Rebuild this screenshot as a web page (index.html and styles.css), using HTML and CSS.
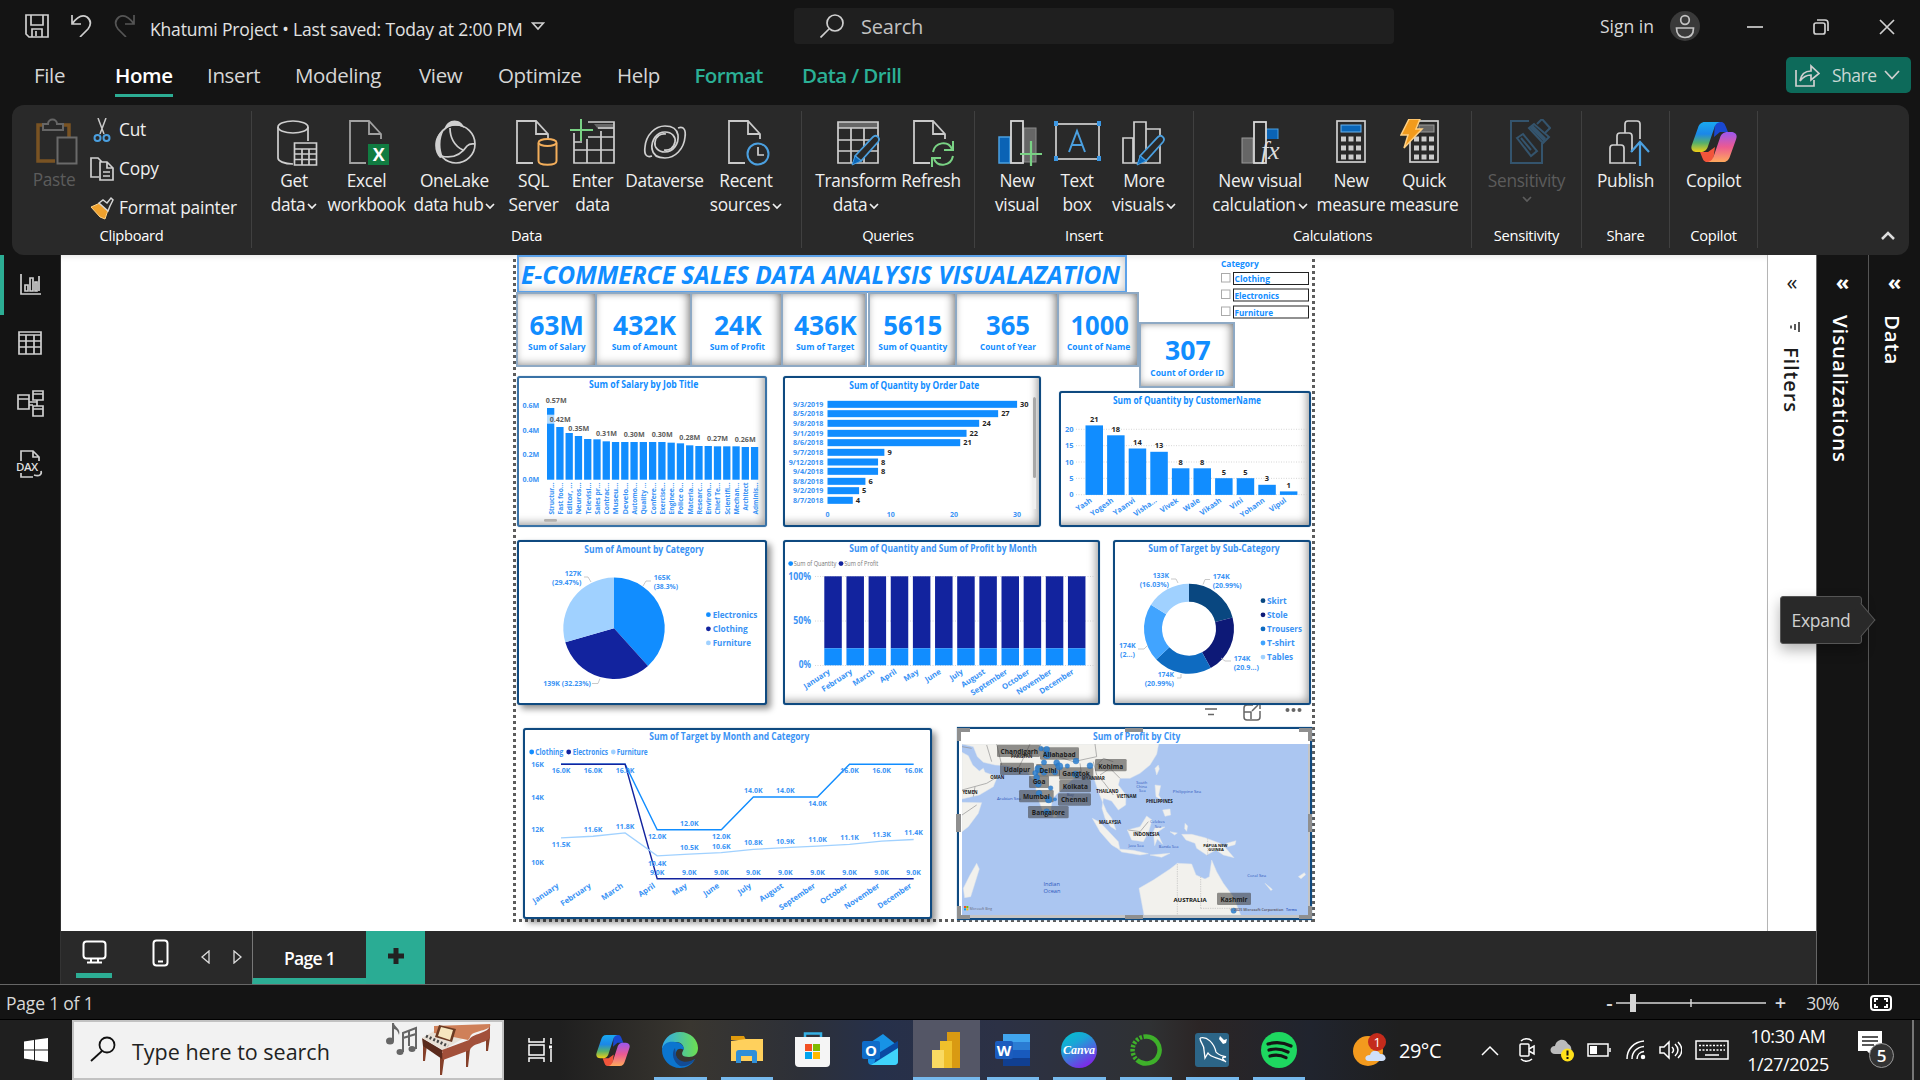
FILE: index.html
```html
<!DOCTYPE html>
<html lang="en">
<head>
<meta charset="utf-8">
<title>Khatumi Project</title>
<link rel="stylesheet" href="styles.css">
</head>
<body>
<svg class="defs" width="0" height="0" aria-hidden="true">
  <defs>
    <linearGradient id="cpBlue" x1="0" y1="0" x2="0" y2="1"><stop offset="0" stop-color="#19a9f0"/><stop offset=".4" stop-color="#1b87e8"/><stop offset=".7" stop-color="#57b06a"/><stop offset="1" stop-color="#f0cf15"/></linearGradient>
    <linearGradient id="cpPink" x1="0" y1="0" x2="0" y2="1"><stop offset="0" stop-color="#9b57f0"/><stop offset=".5" stop-color="#ec5a91"/><stop offset="1" stop-color="#ffa95c"/></linearGradient>
    <symbol id="copilot" viewBox="0 0 46 48" preserveAspectRatio="none">
      <path d="M24 0h6c3 0 4 3 5 6l2 6h-8l-6 6z" fill="#1a48d0"/>
      <path d="M22 48h-6c-3 0-4-3-5-6l-2-6h8l7-6z" fill="#f2553b"/>
      <path d="M14 0h15c-4 1-5 4-6 8l-6 21c-1 4-3 7-8 7H6c-4 0-7-3-5-9L7 7c1-4 3-7 7-7z" fill="url(#cpBlue)"/>
      <path d="M32 48H17c4-1 5-4 6-8l6-21c1-4 3-7 8-7h3c4 0 7 3 5 9l-6 20c-1 4-3 7-7 7z" fill="url(#cpPink)"/>
    </symbol>
    <symbol id="page" viewBox="0 0 42 48"><path d="M17 44H1V2h19l12 13v5M20 2v13h12" fill="none" stroke="#c9c9c9" stroke-width="1.8"/></symbol>
    <symbol id="pencil" viewBox="0 0 30 32"><path d="M4 22 22 3c3-3 8 1 5 5L10 27z" fill="#292929" stroke="#4ba0e0" stroke-width="1.8"/><path d="M4 22l6 5-9 4z" fill="#0a66b8" stroke="#4ba0e0"/></symbol>
    <symbol id="chev" viewBox="0 0 10 7"><path d="M1 1l4 4 4-4" fill="none" stroke="currentColor" stroke-width="1.7"/></symbol>
  </defs>
</svg>

<div class="app">
  <header class="titlebar">
    <div class="quick">
      <svg width="24" height="24" viewBox="0 0 24 24" class="ln"><path d="M1 1h22v22H4l-3-3zM6 1v10h12V1M7 23v-8h10v8M11 17v5"/></svg>
      <svg width="21" height="23" viewBox="0 0 21 23" class="ln"><path d="M1 1v9h9M1 10C6 3 11 0 16 3c5 4 4 8 1 12l-8 8"/></svg>
      <svg width="21" height="23" viewBox="0 0 21 23" class="ln dim"><path d="M20 1v9h-9M20 10C15 3 10 0 5 3c-5 4-4 8-1 12l8 8"/></svg>
    </div>
    <div class="doc"><span>Khatumi Project • Last saved: Today at 2:00 PM</span>
      <svg width="14" height="9" viewBox="0 0 14 9" class="ln"><path d="M1.500 1h11L7 7z"/></svg></div>
    <div class="search">
      <svg width="24" height="24" viewBox="0 0 24 24" class="ln"><circle cx="15" cy="9" r="8"/><path d="M9 15l-8.500 8.500"/></svg><span>Search</span></div>
    <div class="signin">Sign in</div>
    <svg class="avatar" width="30" height="30" viewBox="0 0 30 30"><circle cx="15" cy="15" r="15" fill="#3a3a3a"/><g fill="none" stroke="#c4c4c4" stroke-width="1.700"><circle cx="15" cy="9" r="4.300"/><path d="M6.500 17h17c0 6-3 9.500-8.500 9.500S6.500 23 6.500 17z"/></g></svg>
    <div class="winbtns">
      <svg width="16" height="16" viewBox="0 0 16 16" class="ln"><path d="M0 8h16"/></svg>
      <svg width="16" height="16" viewBox="0 0 16 16" class="ln"><rect x="1" y="4" width="11" height="11" rx="2"/><path d="M4 1h8q3 0 3 3v8"/></svg>
      <svg width="16" height="16" viewBox="0 0 16 16" class="ln"><path d="M1 1l14 14M15 1L1 15"/></svg>
    </div>
  </header>

  <nav class="menu">
    <span>File</span><span class="on">Home</span><span>Insert</span><span>Modeling</span><span>View</span><span>Optimize</span><span>Help</span><span class="ctx">Format</span><span class="ctx">Data / Drill</span>
    <div class="share"><svg width="25" height="23" viewBox="0 0 25 23" class="ln"><path d="M1 6v16h18v-6M5 17c1-6 4-10 11-10V2l8 7.500-8 6.500v-5c-5 0-8 2-11 6z"/></svg><span>Share</span><svg width="16" height="10" viewBox="0 0 16 10" class="ln"><path d="M1 1l7 7.500L15 1"/></svg></div>
  </nav>

  <section class="ribbon">
    <div class="group g-clip">
      <div class="row">
        <div class="btn off"><svg width="42" height="48" viewBox="0 0 42 48"><path d="M9 7H2v36h17M25 7h8v12" fill="none" stroke="#795323" stroke-width="3.500"/><path d="M7 12V6h5c0-6 9-6 9 0h6v6z" fill="#292929" stroke="#666" stroke-width="2"/><rect x="21.500" y="19.500" width="19" height="26" fill="#292929" stroke="#6a6a6a" stroke-width="2"/></svg><span>Paste</span></div>
        <ul class="small">
          <li><svg width="24" height="24" viewBox="0 0 24 24"><path d="M8 0l6 16M16 0l-6 16" stroke="#c9c9c9" stroke-width="1.500"/><g fill="none" stroke="#4ba0e0" stroke-width="2"><circle cx="7.500" cy="20" r="3"/><circle cx="16.500" cy="20" r="3"/></g></svg>Cut</li>
          <li><svg width="24" height="24" viewBox="0 0 24 24" class="ln"><path d="M9 20H1V1h7l4 4M10 5h7l6 6v12H10zM17 5v6h6M13 15h7M13 19h7"/></svg>Copy</li>
          <li><svg width="24" height="24" viewBox="0 0 24 24"><path d="M1 11l9-4 8 7-3 9-5-2z" fill="#f0a22e" stroke="#ffd48a"/><path d="M9 7l4-3 4 3 4-5 2 2-3 6-2 5-9-8z" fill="#292929" stroke="#d5d5d5" stroke-width="1.500"/></svg>Format painter</li>
        </ul>
      </div><h2>Clipboard</h2>
    </div>
    <div class="group g-data">
      <div class="row">
        <div class="btn"><svg width="42" height="48" viewBox="0 0 42 48" class="ln"><ellipse cx="17" cy="8" rx="15" ry="6"/><path d="M2 8v31c0 3 6 6 15 6M32 8v14"/><path d="M18.500 24h22v22h-22zM18.500 30h22M18.500 35h22M18.500 40.500h22M26 30v16M33 30v16"/></svg><span>Get</span><span>data<svg class="cv"><use href="#chev"/></svg></span></div>
        <div class="btn"><svg width="42" height="48" viewBox="0 0 42 48"><use href="#page" opacity=".75"/><rect x="19" y="25" width="21" height="21" fill="#107c41"/><text x="29.500" y="41.500" class="xl">X</text></svg><span>Excel</span><span>workbook</span></div>
        <div class="btn mid"><svg width="42" height="48" viewBox="0 0 42 48"><path d="M10 12C12-2 28-1 30 9c-8-4-15-3-20 3z" fill="#cfcfcf"/><path d="M10 11C-1 16-1 33 6 39l3-1C5 29 6 18 10 11z" fill="#cfcfcf"/><ellipse cx="22" cy="25" rx="19" ry="19" class="st"/><path class="st" d="M7 37c12 3 20-1 26-10 3-3 5-2 8-2M16 9c0 9 4 18 13 22"/></svg><span>OneLake</span><span>data hub<svg class="cv"><use href="#chev"/></svg></span></div>
        <div class="btn"><svg width="42" height="48" viewBox="0 0 42 48"><use href="#page"/><g fill="#292929" stroke="#f3ae5b" stroke-width="2"><path d="M22.500 24v18c0 5 18 5 18 0V24"/><ellipse cx="31.500" cy="23.500" rx="9" ry="3.500"/></g></svg><span>SQL</span><span>Server</span></div>
        <div class="btn mid"><svg width="46" height="48" viewBox="0 0 46 48"><path d="M24 5h20v5H28z" fill="#666"/><path class="st" d="M18 3h26v41H4V14M28 9h16M18 18h26M12 23h-8M4 31h40M17 20v24M31 12v32"/><path d="M11 0v22M0 11h23" stroke="#79d284" stroke-width="2"/></svg><span>Enter</span><span>data</span></div>
        <div class="btn mid"><svg width="44" height="48" viewBox="0 0 44 48"><g class="st"><path d="M9 37C3 39 1 35 2 28 3 16 12 7 22 7c7 0 12 3 13 9 1 9-5 17-13 17-7 0-11-5-10-10 1-6 6-9 11-8"/><path d="M35 9c6-2 8 2 7 9-1 12-10 21-20 21-7 0-12-3-13-9-1-9 5-17 13-17 7 0 11 5 10 10-1 6-6 9-11 8"/></g></svg><span>Dataverse</span></div>
        <div class="btn"><svg width="42" height="48" viewBox="0 0 42 48"><use href="#page"/><circle cx="30" cy="35" r="10.500" fill="#292929" stroke="#4ba0e0" stroke-width="2"/><path class="st" d="M30 28v8h6"/></svg><span>Recent</span><span>sources<svg class="cv"><use href="#chev"/></svg></span></div>
      </div><h2>Data</h2>
    </div>
    <div class="group g-query">
      <div class="row">
        <div class="btn"><svg width="46" height="48" viewBox="0 0 46 48"><path d="M2 3h40v6H2z" fill="#666"/><path class="st" d="M2 3h40v41H2zM2 9h40M2 21h40M2 32h40M15 9v35M28 9v35"/><use href="#pencil" x="15" y="15" width="30" height="32"/></svg><span>Transform</span><span>data<svg class="cv"><use href="#chev"/></svg></span></div>
        <div class="btn"><svg width="42" height="48" viewBox="0 0 42 48"><use href="#page"/><circle cx="30" cy="35" r="12" fill="#292929"/><path d="M20 33c2-10 15-12 19-3M40 22v9h-9M40 37c-2 10-15 12-19 3M19 48v-9h9" fill="none" stroke="#79d284" stroke-width="2"/></svg><span>Refresh</span></div>
      </div><h2>Queries</h2>
    </div>
    <div class="group g-insert">
      <div class="row">
        <div class="btn"><svg width="44" height="48" viewBox="0 0 44 48"><rect x="1" y="18" width="11" height="26" fill="#0a63b5" stroke="#4ba0e0" stroke-width="1.500"/><rect x="26" y="9" width="12" height="34" fill="#666" stroke="#8b8b8b"/><rect x="13" y="2" width="12" height="42" fill="#292929" class="st2"/><path d="M33 22v25M22 35h22" stroke="#79d284" stroke-width="2.200"/></svg><span>New</span><span>visual</span></div>
        <div class="btn mid"><svg width="48" height="48" viewBox="0 0 48 48"><rect x="3" y="5" width="43" height="35" class="st"/><path d="M16 33l8-21 8 21M19 26h11" fill="none" stroke="#4ba0e0" stroke-width="2"/><path d="M1 2h4v5H1zM44 2h4v5h-4zM1 37h4v5H1zM44 37h4v5h-4z" fill="#3b97e3"/></svg><span>Text</span><span>box</span></div>
        <div class="btn mid"><svg width="46" height="48" viewBox="0 0 46 48"><path class="st" d="M2 19h10v25H2zM13 3h12v41H13zM25 10h14v34H25"/><use href="#pencil" x="15" y="15" width="30" height="32"/></svg><span>More</span><span>visuals<svg class="cv"><use href="#chev"/></svg></span></div>
      </div><h2>Insert</h2>
    </div>
    <div class="group g-calc">
      <div class="row">
        <div class="btn"><svg width="44" height="48" viewBox="0 0 44 48"><rect x="1" y="19" width="11" height="25" fill="#666" stroke="#999"/><rect x="25" y="10" width="12" height="34" fill="#0a63b5" stroke="#4ba0e0"/><path d="M24 20h20v28H22z" fill="#292929"/><rect x="13" y="3" width="12" height="41" fill="#292929" class="st2"/><text x="20" y="40" class="fx">fx</text></svg><span>New visual</span><span>calculation<svg class="cv"><use href="#chev"/></svg></span></div>
        <div class="btn mid"><svg width="30" height="48" viewBox="0 0 30 48"><rect x="1" y="2" width="28" height="41" class="st"/><rect x="5" y="6" width="20" height="7" fill="#0a66b8" stroke="#6ab4ef"/><path d="M5 20h20M5 29h20M5 38h20" stroke="#ccc" stroke-width="5" stroke-dasharray="5 2.500"/></svg><span>New</span><span>measure</span></div>
        <div class="btn left"><svg width="40" height="48" viewBox="0 0 40 48"><rect x="10" y="2" width="28" height="41" class="st"/><rect x="19" y="6" width="15" height="7" fill="#666" stroke="#999"/><path d="M14 20h20M14 29h20M14 38h20" stroke="#ccc" stroke-width="5" stroke-dasharray="5 2.500"/><path d="M9 0h11l-4 10h6L4 29l4-13H1z" fill="#f29b1d" stroke="#ffd083" stroke-width="1.500"/></svg><span>Quick</span><span>measure</span></div>
      </div><h2>Calculations</h2>
    </div>
    <div class="group g-one">
      <div class="row"><div class="btn off"><svg width="42" height="48" viewBox="0 0 42 48"><g fill="none" stroke="#34546d" stroke-width="2"><path d="M20 2H2v42h31V24M8 19l6-4 14 17-6 5zM12 19l10 12M20 9l5-4 15 13-6 6z"/><path d="M28 5l5-5 8 9-5 5"/></g><path d="M21 9l14 14 2-4L24 6z" fill="#34546d"/></svg><span>Sensitivity</span><span><svg class="cv"><use href="#chev"/></svg></span></div></div><h2>Sensitivity</h2>
    </div>
    <div class="group g-one b">
      <div class="row"><div class="btn"><svg width="42" height="48" viewBox="0 0 42 48"><path class="st" d="M28 44H2V29q0-3 3-3h8q3 0 3 3v15M9 26V17q0-3 3-3h9q3 0 3 3v16M17 14V5q0-3 3-3h9q3 0 3 3v15"/><path d="M32 47V24M23 33l9-10 9 10" fill="none" stroke="#4ba0e0" stroke-width="2.200"/></svg><span>Publish</span></div></div><h2>Share</h2>
    </div>
    <div class="group g-one b">
      <div class="row"><div class="btn mid"><svg width="46" height="48" viewBox="0 0 46 48"><use href="#copilot" y="3" width="46" height="40"/></svg><span>Copilot</span></div></div><h2>Copilot</h2>
    </div>
    <svg class="fold" width="14" height="9" viewBox="0 0 14 9"><path d="M1 8l6-6 6 6" fill="none" stroke="#ddd" stroke-width="2.500"/></svg>
  </section>

  <main class="work">
    <aside class="rail">
      <div class="on"><svg width="22" height="22" viewBox="0 0 22 22" class="ln"><path d="M1 1v20h20M5 12h3v6H5zM10 5h3v13h-3zM15 9h2v9h-2zM19 3v15"/></svg></div>
      <div><svg width="24" height="24" viewBox="0 0 24 24" class="ln"><path d="M1 1h22v22H1zM1 4h22M1 10h22M1 16h22M8 4v19M16 4v19"/></svg></div>
      <div><svg width="27" height="27" viewBox="0 0 27 27" class="ln"><path d="M1 5h11v14H1zM1 9h11M16 1h10v9H16zM16 4h10M16 16h10v10H16zM16 19h10M12 12h8v-2M12 15h4M20 12v4"/></svg></div>
      <div><svg width="28" height="28" viewBox="0 0 28 28" class="ln"><path d="M5 11V1h12l6 6v4M17 1v6h6M5 23v4h12"/><text x="0" y="21" class="dax">DAX</text><path d="M18 25c6 2 8-1 7-4"/></svg></div>
    </aside>

    <div class="center">
      <div class="stage">
        <div class="report">
          <h1 class="visual banner"><svg viewBox="519 257 606 34" data-chart="banner"></svg></h1>
          <div class="cards" data-chart="cards"></div>
          <div class="visual slicer"><svg viewBox="1216 255 96 66" data-chart="slicer"></svg></div>
          <div class="visual v-salary lite"><svg viewBox="519 378 246 147" data-chart="salary"></svg></div>
          <div class="visual v-date"><svg viewBox="785 378 254 147" data-chart="date"></svg></div>
          <div class="visual v-customer"><svg viewBox="1061 393 248 132" data-chart="customer"></svg></div>
          <div class="visual v-amount drop"><svg viewBox="519 542 246 161" data-chart="amount"></svg></div>
          <div class="visual v-stack"><svg viewBox="785 542 313 161" data-chart="stack"></svg></div>
          <div class="visual v-donut"><svg viewBox="1115 542 194 161" data-chart="donut"></svg></div>
          <svg class="tools" viewBox="1200 705 106 17"><g fill="none" stroke="#666" stroke-width="1.500"><path d="M1205 709h12M1208 714.500h6"/><path d="M1253 705h-6q-3 0-3 3v9q0 3 3 3h10q3 0 3-3v-6M1244 712h7v7M1252 711l6-6M1260 705v4"/></g><g fill="#666"><circle cx="1287.500" cy="710" r="2"/><circle cx="1293.500" cy="710" r="2"/><circle cx="1299.500" cy="710" r="2"/></g></svg>
          <div class="visual v-target drop"><svg viewBox="525 730 405 187" data-chart="target"></svg></div>
          <div class="visual v-map"><svg viewBox="959 729 351 189" data-chart="map"></svg></div>
        </div>
        <aside class="filters">
          <b class="dbl">«</b>
          <svg width="14" height="12" viewBox="0 0 14 12"><path d="M11 1v10M7 3v6M3 4.500v3" stroke="#222" stroke-width="1.500"/></svg>
          <span>Filters</span>
        </aside>
      </div>
      <footer class="tabs">
        <div class="view on"><svg width="25" height="24" viewBox="0 0 25 24" class="wh"><rect x="1.500" y="1.500" width="22" height="17" rx="3"/><path d="M9 19v3M16 19v3M5 22.500h15"/></svg></div>
        <div class="view"><svg width="17" height="28" viewBox="0 0 17 28" class="wh"><rect x="1.500" y="1.500" width="14" height="25" rx="3"/><path d="M6 22.500h5"/></svg></div>
        <svg class="tri" width="9" height="14" viewBox="0 0 9 14"><path d="M8 1v12L1 7z"/></svg>
        <svg class="tri" width="9" height="14" viewBox="0 0 9 14"><path d="M1 1v12l7-6z"/></svg>
        <div class="tab">Page 1</div>
        <div class="add"><svg width="18" height="18" viewBox="0 0 18 18"><path d="M9 1v16M1 9h16" stroke="#222" stroke-width="5"/></svg></div>
      </footer>
    </div>
    <aside class="pane"><b class="dbl">«</b><span>Visualizations</span></aside>
    <aside class="pane"><b class="dbl">«</b><span>Data</span></aside>
    <div class="tip">Expand</div>
  </main>

  <div class="status">
    <span>Page 1 of 1</span>
    <div class="zoom"><b>-</b><svg width="150" height="18" viewBox="0 0 150 18"><path d="M0 9h150M75 5v8" stroke="#d5d5d5" stroke-width="1.500"/><rect x="14" y="0" width="6" height="18" fill="#d5d5d5"/></svg><b>+</b><span>30%</span>
      <svg width="22" height="16" viewBox="0 0 22 16" class="wh"><rect x="1" y="1" width="20" height="14" rx="3"/><path d="M8 4H5v3M5 9v3h3M14 4h3v3M17 9v3h-3"/></svg></div>
  </div>

  <div class="taskbar">
    <div class="start"><svg width="24" height="24" viewBox="0 0 24 24"><path d="M0 3.500L10 2v9.500H0zM11 1.800L24 0v11.500H11zM0 12.500h10V22L0 20.500zM11 12.500h13V24l-13-1.800z" fill="#fff"/></svg></div>
    <div class="find">
      <svg width="26" height="26" viewBox="0 0 26 26" fill="none" stroke="#111" stroke-width="1.800"><circle cx="17" cy="9" r="7.500"/><path d="M12 15L1 25"/></svg>
      <span>Type here to search</span>
      <svg class="art" width="108" height="54" viewBox="0 0 108 54">
        <g fill="#666"><ellipse cx="4" cy="18" rx="4" ry="3.500"/><ellipse cx="14" cy="29" rx="3.500" ry="3"/><ellipse cx="26" cy="26" rx="3.500" ry="3"/><path d="M6 0h2c0 4 7 5 5 12-1-4-3-6-5-6v12H6z"/></g>
        <path d="M17 29V10l13-5v21M17 15l13-4M23 8v15" fill="none" stroke="#666" stroke-width="2"/>
        <g fill="#85402a"><path d="M37 20l4 2-2 16h-2zM54 30h5l-3 22h-2zM80 26h4l-2 18h-2zM100 14h4l-2 14h-2z"/></g>
        <path d="M36 15l20 12v9L37 23z" fill="#5a2a1c"/><path d="M36 15l12-7 30 7-21 12z" fill="#e8e0d6"/><path d="M40 13l22 10" stroke="#444" stroke-width="3" stroke-dasharray="2 2"/>
        <path d="M48 3l56-2c2 5-8 6-16 9-5 2-3 5-6 7L48 10z" fill="#cf8059"/><path d="M56 27l27-10c3-7 20-6 21-15v12c-3 7-17 5-20 13L57 37z" fill="#a2503a"/>
        <path d="M53 2l17 4-4 13-17-5z" fill="#6b3a22"/><path d="M55 4l12 3-3 10-12-4z" fill="#f6e6bf"/>
      </svg>
    </div>
    <div class="tv"><svg width="24" height="24" viewBox="0 0 24 24" fill="none" stroke="#fff" stroke-width="1.500"><path d="M1 0v4h15V0M1 24v-4h15v4M1 7h15v10H1zM23 0v6M23 11v13"/><path d="M21 9h3" stroke-width="3"/></svg></div>
    <div class="cp"><svg width="34" height="31" viewBox="0 0 34 31"><use href="#copilot" width="34" height="31"/></svg></div>
    <div class="apps">
      <div class="run"><svg width="36" height="36" viewBox="0 0 36 36"><defs><linearGradient id="eg" x1="0" x2="1"><stop offset="0" stop-color="#2fa8ee"/><stop offset="1" stop-color="#6de04f"/></linearGradient></defs><path d="M0 18C0 8 8 0 18 0c11 0 18 8 18 16 0 6-4 9-9 9-7 0-8-3-6-6 2-4-1-9-7-9C7 10 1 13 0 18z" fill="url(#eg)"/><path d="M0 18c1-7 7-9 13-8 6 0 9 4 9 8-5-3-9 0-8 6 1 7 9 10 19 3-3 6-9 9-15 9C8 36 0 28 0 18z" fill="#0b75cf"/><path d="M13 16c-4 5-2 14 5 18 6 1 12-2 15-7-8 5-17 3-19-4z" fill="#134b93"/></svg></div>
      <div class="run"><svg width="32" height="28" viewBox="0 0 32 28"><path d="M0 0h13l2 4H0z" fill="#e09a0c"/><path d="M0 5l15-2h17v22H0z" fill="#ffd05c"/><path d="M5 27V17q0-3 3-3h15q3 0 3 3v10h-5v-7H10v7z" fill="#2f8fd9"/></svg></div>
      <div><svg width="36" height="36" viewBox="0 0 36 36"><path d="M10 7V1.500h16V7" fill="none" stroke="#35b0e4" stroke-width="2.500"/><path d="M0 5h35v26q0 4-4 4H4q-4 0-4-4z" fill="#f5f5f5"/><path d="M10 12h7v7h-7z" fill="#f25022"/><path d="M18 12h7v7h-7z" fill="#7fba00"/><path d="M10 20h7v7h-7z" fill="#00a4ef"/><path d="M18 20h7v7h-7z" fill="#ffb900"/></svg></div>
      <div><svg width="36" height="32" viewBox="0 0 36 32"><path d="M6 10L21 0l15 12v15q0 4-4 4H10q-4 0-4-4z" fill="#1793e6"/><path d="M15 20l21-13v9L12 30z" fill="#0a4aa3"/><path d="M36 14v13q0 4-4 4H9z" fill="#3fd3fb"/><rect y="7" width="18" height="18" rx="2" fill="#0f6cc9"/><text x="9" y="21.500" class="lg">O</text></svg></div>
      <div class="run act"><svg width="28" height="36" viewBox="0 0 28 36"><path d="M15 0h13v36H15z" fill="#d99a12"/><path d="M8 9h12v27H8z" fill="#efc02c"/><path d="M0 18h12v18H0z" fill="#f9da62"/></svg></div>
      <div class="run"><svg width="36" height="32" viewBox="0 0 36 32"><path d="M8 0h27v8H8z" fill="#41a5ee"/><path d="M8 8h27v8H8z" fill="#2b7cd3"/><path d="M8 16h27v8H8z" fill="#185abd"/><path d="M8 24h27v8H8z" fill="#103f91"/><rect y="7" width="18" height="18" rx="2" fill="#1b5cbe"/><text x="9" y="21.500" class="lg">W</text></svg></div>
      <div class="run"><svg width="36" height="36" viewBox="0 0 36 36"><defs><linearGradient id="cg" x1="0" y1="0" x2=".6" y2="1"><stop offset="0" stop-color="#00c4cc"/><stop offset=".4" stop-color="#1aa5d6"/><stop offset="1" stop-color="#7d2ae8"/></linearGradient></defs><circle cx="18" cy="18" r="18" fill="url(#cg)"/><text x="18" y="22" class="cv-logo">Canva</text></svg></div>
      <div class="run"><svg width="32" height="32" viewBox="0 0 32 32" fill="none" stroke="#3eb02a"><path d="M16 2.500a13.500 13.500 0 1 1-9 23.500" stroke-width="4.500"/><path d="M16 2.500a13.500 13.500 0 0 0-9 23.500" stroke-width="4.500" stroke-dasharray="2.500 1.500"/></svg></div>
      <div class="run"><svg width="34" height="34" viewBox="0 0 34 34"><rect width="34" height="34" rx="3" fill="#2c6587"/><path d="M5 5c7-2 14 5 16 14 2 3 7 4 10 5-4 0-5 1 0 5M5 5c0 5 4 6 4 12l1 8 3-5c3 5 9 4 16 8" fill="none" stroke="#fff" stroke-width="1.300"/><path d="M25 3l4 4 3-1-1 4-3 1-4-5z" fill="#fff"/></svg></div>
      <div class="run"><svg width="36" height="36" viewBox="0 0 36 36"><circle cx="18" cy="18" r="18" fill="#1ed760"/><path d="M7 12c8-2.500 16-1.500 23 2M8 18c7-2 13-1 19 2M9 24c6-1.500 11-1 16 1.700" fill="none" stroke="#151515" stroke-width="3.200" stroke-linecap="round"/></svg></div>
    </div>
    <div class="weather"><svg width="34" height="34" viewBox="0 0 34 34"><circle cx="15" cy="18" r="15" fill="#f39a1e"/><path d="M16 28c-5 0-5-6 1-6 1-5 8-6 10-1 6-1 8 7 2 7z" fill="#cfe0fa"/><circle cx="24" cy="9" r="9" fill="#c42b1c"/><text x="24" y="14" class="one">1</text></svg><span>29°C</span></div>
    <div class="tray">
      <svg width="18" height="11" viewBox="0 0 18 11"><path d="M1 10l8-8 8 8"/></svg>
      <svg width="16" height="24" viewBox="0 0 16 24"><rect x="1" y="6" width="9" height="12" rx="1"/><path d="M10 11l5-3v8l-5-3M2 3c3-3 8-3 11 0M2 21c3 3 8 3 11 0"/></svg>
      <svg width="24" height="24" viewBox="0 0 24 24"><path d="M5 16c-6 0-6-8 0-8C6 1 15-1 18 6c5 2 4 10 0 10z" fill="#bbb" stroke="none"/><circle cx="17.500" cy="17" r="6.500" fill="#ffe11a" stroke="none"/><path d="M17.500 12.500v5M17.500 19v2" stroke="#111" stroke-width="2"/></svg>
      <svg width="24" height="14" viewBox="0 0 24 14"><path d="M1 1h20v12H1zM23 5v4"/><path d="M3 3h7v8H3z" fill="#fff" stroke="none"/></svg>
      <svg width="20" height="20" viewBox="0 0 20 20"><path d="M1 19C1 9 8 2 18 1M6 19C6 12 11 7 18 6.500M11 19c0-4 3-7 7-7.500"/><circle cx="17" cy="17" r="1.500" fill="#fff"/></svg>
      <svg width="23" height="20" viewBox="0 0 23 20"><path d="M1 7v6h4l5 5V2L5 7zM13 7c2 2 2 4 0 6M16 4c4 4 4 8 0 12M19 2c5 5 5 11 0 16"/></svg>
      <svg width="34" height="20" viewBox="0 0 34 20"><path d="M1 1h32v18H1zM10 15h14"/><path d="M4 5.500h26M4 10h26" stroke-dasharray="2 1.500"/></svg>
    </div>
    <div class="clock"><span>10:30 AM</span><span>1/27/2025</span></div>
    <svg class="notif" width="37" height="38" viewBox="0 0 37 38"><path d="M1 0h24v20H16v6l-6-6H1z" fill="#fff"/><path d="M5 6h16M5 10h16M5 14h12" stroke="#222" stroke-width="1.500"/><circle cx="24.500" cy="24.500" r="12" fill="#333" stroke="#999"/><text x="24.500" y="31" class="five">5</text></svg>
    <i class="edge"></i>
  </div>
</div>
<script src="charts.js"></script>
</body>
</html>
```
FILE: styles.css
```css
* { box-sizing: border-box; }
body { margin: 0; background: #141414; color: #f0f0f0; font-family: "Open Sans", "Noto Sans", sans-serif; overflow: hidden; }
h1, h2, ul { margin: 0; padding: 0; font-weight: 400; list-style: none; }
svg { display: block; flex: none; }
.defs { position: absolute; }
.app { width: 1920px; height: 1080px; display: grid; grid-template-rows: 52px 53px 150px 730px 35px 60px; }
.ln, .st { fill: none; stroke: #cfcfcf; stroke-width: 1.7; }
.st2 { stroke: #d8d8d8; stroke-width: 1.8; }
.dim { opacity: .35; }
.wh { fill: none; stroke: #fff; stroke-width: 2; }

/* title bar */
.titlebar { display: grid; grid-template-columns: 150px 644px 600px 206px 70px 48px 1fr; align-items: center; }
.quick { display: flex; gap: 22px; padding-left: 25px; }
.doc { display: flex; gap: 8px; align-items: center; font-size: 17.5px; letter-spacing: -.17px; color: #e2e2e2; padding-top: 6px; white-space: nowrap; }
.doc svg { margin-top: -5px; }
.search { height: 36px; background: #1f1f1f; border-radius: 4px; display: flex; align-items: center; gap: 17px; padding-left: 26px; font-size: 20px; letter-spacing: -.2px; color: #c2c2c2; }
.signin { grid-column: 5; font-size: 17.5px; letter-spacing: 0; color: #d8d8d8; }
.winbtns { display: flex; gap: 50px; padding-left: 29px; padding-top: 2px; }

/* menu */
.menu { display: grid; grid-template-columns: 81px 92px 88px 124px 79px 119px 77.5px 107.5px 984px 125px; padding-left: 34px; font-size: 20.5px; letter-spacing: -.35px; color: #d6d6d6; white-space: nowrap; }
.menu > span { line-height: 46px; height: 45px; justify-self: start; }
.menu .on { color: #fff; font-weight: 600; border-bottom: 3px solid #2cad94; letter-spacing: -.4px; }
.menu .ctx { color: #2bb096; letter-spacing: -.6px; font-weight: 600; }
.share { margin-top: 5px; width: 125px; height: 36px; background: #0d6a5a; border-radius: 5px; display: flex; align-items: center; padding-left: 9px; font-size: 17.5px; letter-spacing: -.5px; color: #c9d8d4; }
.share span { margin: 0 7px 0 12px; }

/* ribbon */
.ribbon { margin: 0 12px; background: #292929; border-radius: 12px; display: flex; position: relative; padding: 6px 0 7px; }
.group { border-right: 1px solid #404040; display: flex; flex-direction: column; justify-content: space-between; }
.group h2 { font-size: 14.7px; letter-spacing: -.3px; text-align: center; line-height: 24px; color: #fff; margin-bottom: 1px; }
.row { display: grid; justify-content: start; padding-top: 8px; }
.btn { display: flex; flex-direction: column; align-items: center; font-size: 17.3px; line-height: 24px; letter-spacing: -.3px; white-space: nowrap; width: 0; justify-self: center; }
.btn > svg { margin: 0 0 2px 6px; }
.btn.mid > svg { margin-left: 0; }
.btn.left > svg { margin-left: -8px; }
.btn > span { display: flex; align-items: center; gap: 2px; }
.off { color: #5c5c5c; }
.cv { width: 10px; height: 7px; display: inline-block; margin-top: 3px; }
.g-clip { width: 240px; }
.g-clip .row { grid-template-columns: 84px 150px; margin-top: -1px; height: 106px; }
.small { font-size: 17.3px; letter-spacing: -.2px; display: grid; grid-auto-rows: 39px; margin: -8px 0 0 -6px; }
.small li { display: flex; align-items: center; gap: 5px; white-space: nowrap; }
.g-data { width: 550px; } .g-data .row { padding-left: 16px; grid-template-columns: 52px 93px 83px 75px 43px 101px 62px; }
.g-query { width: 173px; } .g-query .row { grid-template-columns: 108px 42px; }
.g-insert { width: 219px; } .g-insert .row { padding-left: 20px; grid-template-columns: 44px 76px 58px; }
.g-calc { width: 278px; } .g-calc .row { padding-left: 12px; grid-template-columns: 108px 74px 72px; }
.g-one { width: 110px; } .g-one.b { width: 88px; } .g-one .row { justify-content: center; }
.fold { position: absolute; right: 14px; bottom: 15px; }
.xl, .lg { fill: #fff; font-weight: 700; font-size: 18px; text-anchor: middle; }
.lg { font-size: 15px; }
.fx { fill: #ddd; font: italic 26px "Liberation Serif", serif; }

/* work area */
.work { display: grid; grid-template-columns: 61px 1756px 52px 51px; position: relative; border-bottom: 1px solid #666; }
.rail { border-right: 1px solid #333; }
.rail div { height: 60.3px; display: flex; align-items: center; justify-content: center; padding-bottom: 5px; }
.rail .on { border-left: 4px solid #2cad94; padding: 0 3px 3px 0; }
.dax { font-size: 11.5px; font-weight: 600; fill: #ddd; stroke: none; letter-spacing: -.5px; }
.center { display: grid; grid-template-rows: 676px 1fr; border-right: 1px solid #666; }
.stage { background: #fff; display: grid; grid-template-columns: 1706px 49px; }
.report { position: relative; overflow: hidden; margin-left: -1px; box-shadow: inset 0 6px 6px -5px rgba(0,0,0,.12); }
.report::before { content: ""; position: absolute; left: 453px; top: 4px; width: 802px; height: 663px; --d: #5c5c5c 0 3px, transparent 3px 6px;
  background: repeating-linear-gradient(180deg, var(--d)) 0 0/3px 100% no-repeat, repeating-linear-gradient(180deg, var(--d)) 100% 0/3px 100% no-repeat, repeating-linear-gradient(90deg, var(--d)) 0 100%/100% 3px no-repeat; }
.visual { position: absolute; background: #fff; border: 2px solid #0f4a80; border-radius: 3px; box-shadow: inset -6px -6px 8px -4px rgba(0,0,0,.38), 0 0 1px #5b8dbb; }
.visual > svg { width: 100%; height: 100%; }
.lite { border-color: #3972a6; }
.drop { box-shadow: 4px 4px 6px rgba(0,0,0,.42), 0 0 1px #5b8dbb; }
.banner { left: 457px; top: 0; width: 610px; height: 38px; border-color: #5ba1e9; border-radius: 0; box-shadow: inset 0 0 10px rgba(0,0,0,.25); }
.card { position: absolute; border: 2px solid #8ea9c4; background: #fff; box-shadow: inset -6px 0 9px -3px rgba(0,0,0,.33), inset 0 -4px 9px -2px rgba(0,0,0,.28), inset 0 4px 7px -4px rgba(0,0,0,.25); }
.card svg { width: 100%; height: 100%; }
.slicer { left: 1156px; top: 0; width: 96px; height: 66px; border: 0; box-shadow: none; background: none; }
.v-salary { left: 457px; top: 121px; width: 250px; height: 151px; }
.v-date { left: 723px; top: 121px; width: 258px; height: 151px; }
.v-customer { left: 999px; top: 136px; width: 252px; height: 136px; }
.v-amount { left: 457px; top: 285px; width: 250px; height: 165px; }
.v-stack { left: 723px; top: 285px; width: 317px; height: 165px; }
.v-donut { left: 1053px; top: 285px; width: 198px; height: 165px; }
.tools { position: absolute; left: 1140px; top: 450px; width: 106px; height: 17px; }
.v-target { left: 463px; top: 473px; width: 409px; height: 191px; }
.v-map { left: 897px; top: 472px; width: 355px; height: 193px; border-radius: 0; }
.v-map > svg { overflow: visible; }
.filters { border-left: 1px solid #b5b5b5; color: #1c1c1c; display: flex; flex-direction: column; align-items: center; }
.filters span, .pane span { writing-mode: vertical-rl; font-weight: 600; font-size: 20px; line-height: 24px; margin-right: 3px; }
.filters span { margin-top: 14px; letter-spacing: .9px; }
.dbl { font-size: 22px; line-height: 24px; margin-top: 14px; font-weight: 400; margin-bottom: 28px; }
.filters svg { margin-left: 6px; }
.pane { display: flex; flex-direction: column; align-items: center; border-right: 1px solid #555; color: #fff; background: #141414; }
.pane:nth-last-of-type(1) { border-right: 0; }
.pane .dbl { font-weight: 700; margin-bottom: 22px; }
.pane span { font-size: 20.5px; letter-spacing: .85px; }
.tip { position: absolute; z-index: 0; left: 1780px; top: 341px; width: 82px; height: 48px; background: #292929; border: 1px solid #555; border-radius: 3px; line-height: 46px; text-align: center; font-size: 17.5px; letter-spacing: -.3px; color: #d0d0d0; box-shadow: 0 6px 14px rgba(0,0,0,.3); }
.tip::after { content: ""; position: absolute; z-index: -1; right: -12px; top: 11px; width: 23px; height: 23px; background: #292929; border: 1px solid #555; border-width: 1px 1px 0 0; transform: scaleX(.85) rotate(45deg); }

.tabs { background: #292929; display: grid; grid-template-columns: 66px 74px 32px 20px 113px 59px; align-items: center; }
.view { justify-self: center; height: 53px; display: flex; justify-content: center; padding-top: 9px; width: 36px; }
.view:nth-child(2) svg { margin-top: -1px; }
.view.on { box-shadow: inset 0 -6px #292929, inset 0 -11px #2cad94; }
.view:nth-child(2) { margin-right: 8px; }
.tri { fill: none; stroke: #ddd; stroke-width: 1.3; margin-top: -2px; }
.tab { height: 53px; border-left: 1px solid #777; border-bottom: 6px solid #2cad94; text-align: center; font-weight: 600; line-height: 54px; font-size: 17.5px; letter-spacing: -.7px; color: #fff; margin-left: -1px; }
.add { height: 53px; background: #2aac94; display: grid; place-items: center; padding-bottom: 3px; }

.status { border-bottom: 1px solid #000; display: flex; justify-content: space-between; align-items: center; padding: 1px 29px 0 6px; font-size: 17.5px; letter-spacing: -.2px; color: #d8d8d8; }
.zoom { display: flex; align-items: center; }
.zoom b { font-size: 20px; width: 14px; text-align: center; font-weight: 600; }
.zoom b + svg { margin-right: 7px; } .zoom span { margin: 0 31px 0 19px; letter-spacing: -.6px; }

/* taskbar */
.taskbar { background: linear-gradient(90deg, #1f1f1f 0, #1f1f1f 560px, #393630 690px, #2d3038 800px, #26304a 880px, #2c3145 1000px, #2f3133 1150px, #2b2525 1200px, #20242e 1310px, #1f1f1f 1400px); display: grid; grid-template-columns: 72px 432px 74px 69px 665px 127px 291px 116px 66px 1fr; height: 60px; align-items: center; }
.start { padding-left: 24px; }
.find { height: 60px; background: #f2f2f2; border: 2px solid #c2c2c2; display: flex; align-items: center; padding-left: 16px; color: #222; font-size: 21.5px; letter-spacing: 0; }
.find span { margin: 2px auto 0 16px; white-space: nowrap; }
.find > svg:first-child { margin-top: -3px; }
.art { margin-right: 8px; }
.tv { padding-left: 24px; }
.cp { padding-left: 18px; }
.apps { display: grid; grid-template-columns: repeat(10, 66.5px); height: 60px; }
.apps div { display: grid; place-items: center; position: relative; }
.apps .run::after { content: ""; position: absolute; left: 7px; right: 7px; bottom: 0; height: 3px; background: #76b9ed; }
.apps .act { background: #545666; }
.apps .act::after { left: 0; right: 0; }
.cv-logo { font: italic 700 12px "Liberation Serif", serif; fill: #fff; text-anchor: middle; }
.weather { display: flex; gap: 12px; align-items: center; padding-left: 41px; font-size: 20px; letter-spacing: -.5px; color: #fff; }
.one { font-size: 13px; fill: #fff; text-anchor: middle; } .five { font-size: 17px; font-weight: 600; fill: #fff; text-anchor: middle; }
.tray { display: grid; grid-template-columns: 38px 31px 37px 39px 33px 36px 34px; align-items: center; padding-left: 42px; }
.tray svg { fill: none; stroke: #fff; stroke-width: 1.5; }
.clock { display: grid; justify-items: center; font-size: 18px; line-height: 28px; letter-spacing: -.4px; color: #fff; white-space: nowrap; }
.notif { margin-left: 11px; } .edge { width: 2px; height: 60px; background: #777; justify-self: end; margin-right: 7px; }

svg text { font-family: "Open Sans", "Noto Sans", sans-serif; }
svg text.cv-logo, svg text.fx { font-family: "Liberation Serif", serif; }
.cb { font-weight: 700; }
```
FILE: charts.js
```js
const BLUE = '#118dff', NAVY = '#12239e', PALE = '#a0d1ff', TEXT = '#3a93f5';
const MONTHS = ['January', 'February', 'March', 'April', 'May', 'June', 'July', 'August', 'September', 'October', 'November', 'December'];
const HEAD = 9.8;

// Text running from x1 to x2.
function span(x1, x2, y, s, size = 8, fill = TEXT, extra = '') {
  return `<text class="cb" x="${x1}" y="${y}" font-size="${size}" fill="${fill}" textLength="${x2 - x1}" lengthAdjust="spacingAndGlyphs" ${extra}>${s}</text>`;
}
function txt(x, y, s, size = 7.5, fill = TEXT, anchor = 'start', extra = '') {
  return `<text class="cb" x="${x}" y="${y}" font-size="${size}" fill="${fill}" text-anchor="${anchor}" ${extra}>${s}</text>`;
}
const tilt = (x, y, s, size = 7.5, a = -34) => txt(x, y, s, size, TEXT, 'end', `transform="rotate(${a} ${x} ${y})"`);
const rect = (x, y, w, h, fill, extra = '') => `<rect x="${x}" y="${y}" width="${w}" height="${h}" fill="${fill}" ${extra}/>`;
const dot = (x, y, fill, r = 2.4) => `<circle cx="${x}" cy="${y}" r="${r}" fill="${fill}"/>`;
const line = (d, stroke = '#bbb', w = 0.8, extra = '') => `<path d="${d}" fill="none" stroke="${stroke}" stroke-width="${w}" ${extra}/>`;

function slices(cx, cy, R, r, parts) {
  let a = 0, out = '';
  const p = (rad, t) => `${cx + rad * Math.sin(t)} ${cy - rad * Math.cos(t)}`;
  for (const [v, fill] of parts) {
    const b = a + v / 100 * 2 * Math.PI, big = b - a > Math.PI ? 1 : 0;
    out += `<path d="M${p(R, a)}A${R} ${R} 0 ${big} 1 ${p(R, b)}L${p(r, b)}A${r} ${r} 0 ${big} 0 ${p(r, a)}Z" fill="${fill}"/>`;
    a = b;
  }
  return out;
}

const charts = {
  banner: () => span(521, 1120, 284, 'E-COMMERCE SALES DATA ANALYSIS VISUALAZATION', 24.3, BLUE, 'font-style="italic"'),

  slicer() {
    let s = span(1221, 1258.7, 267, 'Category', 9.3, BLUE);
    [['Clothing', 272, 1270], ['Electronics', 288.5, 1279], ['Furniture', 305.5, 1273]].forEach(([n, y, x2]) => {
      s += rect(1221.5, y + 1.5, 8.5, 8.5, '#fff', 'stroke="#aaa"') + rect(1233.5, y + .5, 75, 12, '#fff', 'stroke="#222"') + span(1234.5, x2, y + 10, n, 9.3, BLUE);
    });
    return s;
  },

  salary() {
    let s = span(589, 698.3, 388, 'Sum of Salary by Job Title', HEAD, BLUE);
    ['0.6M', '0.4M', '0.2M', '0.0M'].forEach((t, i) => s += span(522.5, 539.3, 407.8 + i * 24.7, t, 7.5));
    const tops = [474, 531, 549, 558, 567, 568, 574, 576, 576, 576, 576, 576, 576, 578, 580, 586, 588, 588, 589, 589, 589, 591, 591];
    const jobs = ['Structur...', 'Fast foo...', 'Editor, ...', 'Neuros...', 'Televisi...', 'Sales pr...', 'Contrac...', 'Museu...', 'Develo...', 'Automo...', 'Quality ...', 'Confere...', 'Exercise...', 'Enginee...', 'Police o...', 'Materia...', 'Researc...', 'Environ...', 'Chief Te...', 'Scientifi...', 'Mechan...', 'Architect', 'Adminis...'];
    tops.forEach((t, i) => {
      const x = 547 + i * 9.27, y = 250 + t / 3, h = jobs[i] === 'Architect' ? 28 : 32;
      s += rect(x, y, 7.3, 479.7 - y, BLUE);
      s += `<text class="cb" transform="translate(${x + 6.6} ${482.5 + h}) rotate(-90)" font-size="7.4" fill="${TEXT}" textLength="${h}" lengthAdjust="spacingAndGlyphs">${jobs[i]}</text>`;
    });
    s += rect(546, 414.7, 24, 9, '#fff', 'opacity=".7"');
    [['0.57M', 107, 459], ['0.42M', 119, 516], ['0.35M', 175, 543], ['0.31M', 258, 558], ['0.30M', 341, 561], ['0.30M', 425, 561], ['0.28M', 508, 570], ['0.27M', 591, 573], ['0.26M', 674, 576]]
      .forEach(([t, x, y]) => s += span(510 + x / 3, 531 + x / 3, 250 + y / 3, t, 7.5, '#605e5c'));
    return s + rect(544, 519, 13, 2.7, '#b3b0ad', 'rx="1.3"');
  },

  date() {
    let s = span(849.3, 979.3, 388.7, 'Sum of Quantity by Order Date', HEAD, BLUE);
    const d = [['9/3/2019', 30, 463], ['8/5/2018', 27, 491], ['9/8/2018', 24, 520], ['9/1/2019', 22, 550], ['8/6/2018', 21, 578], ['9/7/2018', 9, 607], ['9/12/2018', 8, 636], ['9/4/2018', 8, 664], ['8/8/2018', 6, 694], ['9/2/2019', 5, 722], ['8/7/2018', 4, 751]];
    d.forEach(([n, v, y3]) => {
      const y = 250 + y3 / 3, x2 = 827.5 + v * 6.32;
      s += span(n.length > 8 ? 788.7 : 793, 823.3, y + 2.7, n, 7.5) + rect(827.5, y - 3.5, v * 6.32, 7, BLUE);
      s += span(x2 + 3, x2 + (v > 9 ? 11.5 : 7.3), y + 2.7, v, 7.5, '#252423');
    });
    [0, 10, 20, 30].forEach(v => s += txt(827.5 + v * 6.32, 516.8, v, 7, TEXT, 'middle'));
    return s + rect(1033, 397, 3, 112, '#f0f0f0') + rect(1033, 397, 3, 81, '#a8a8a8', 'rx="1.5"');
  },

  customer() {
    let s = span(1113, 1261, 404, 'Sum of Quantity by CustomerName', HEAD, BLUE);
    [20, 15, 10, 5, 0].forEach(v => {
      const y = 494.7 - v * 3.27;
      s += txt(1073.5, y + 2.7, v, 7.5, TEXT, 'end') + line(`M1076 ${y}H1307`, '#ccc', .8, 'stroke-dasharray="1 1.5"');
    });
    [['Yash', 21], ['Yogesh', 18], ['Yaanvi', 14], ['Visha...', 13], ['Vivek', 8], ['Wale', 8], ['Vikash', 5], ['Vini', 5], ['Yohann', 3], ['Vipul', 1]].forEach(([n, v], i) => {
      const x = 1085.5 + i * 21.6, y = 494.7 - v * 3.3;
      s += rect(x, y, 17.5, 494.9 - y, BLUE) + txt(x + 8.7, y - 3.7, v, 7.5, '#252423', 'middle') + tilt(x + 7, 501.5, n, 7.4, -35);
    });
    return s;
  },

  amount() {
    let s = span(584.3, 703.7, 552.7, 'Sum of Amount by Category', HEAD);
    s += slices(614, 628.3, 50.7, 0.01, [[38.3, BLUE], [32.23, NAVY], [29.47, PALE]]);
    s += line('M584 577h4l3 5M651 581h-5l-3 5M592 683.5h6l2-5');
    s += span(564.7, 581.3, 575.7, '127K', 7.5) + span(552, 581.3, 584.7, '(29.47%)', 7.5) + span(653.7, 670.3, 580, '165K', 7.5) + span(653.7, 678, 589, '(38.3%)', 7.5) + span(543.3, 591, 685.7, '139K (32.23%)', 7.5);
    [['Electronics', 757.3, BLUE], ['Clothing', 747.7, NAVY], ['Furniture', 751, PALE]].forEach(([n, x2, c], i) => s += dot(708.4, 614.7 + i * 14.1, c) + span(712.7, x2, 618 + i * 14.1, n, 9.5));
    return s;
  },

  stack() {
    let s = span(849.3, 1036.7, 552, 'Sum of Quantity and Sum of Profit by Month', HEAD);
    s += dot(790.7, 563.6, BLUE) + dot(841, 563.6, NAVY);
    s += span(793.7, 836.3, 566.3, 'Sum of Quantity', 7.3, '#777', 'style="font-weight:400"') + span(844.3, 878.3, 566.3, 'Sum of Profit', 7.3, '#777', 'style="font-weight:400"');
    s += span(788.3, 811, 579.7, '100%', 9.7) + span(793.3, 811, 624, '50%', 9.7) + span(798.7, 811, 668, '0%', 9.7);
    [576.5, 621, 665.5].forEach(y => s += line(`M815 ${y}H1094`, '#ccc', .8, 'stroke-dasharray="1 1.5"'));
    MONTHS.forEach((m, i) => {
      const x = 824.3 + i * 22.15;
      s += rect(x, 576.3, 17.5, 72, NAVY) + rect(x, 648.3, 17.5, 17, BLUE) + tilt(x + 6.5, 673, m, 7.7, -33);
    });
    return s;
  },

  donut() {
    let s = span(1148.3, 1279.7, 552, 'Sum of Target by Sub-Category', HEAD);
    const c = ['#094780', '#0d1977', '#0e6bc1', '#41a4ff', PALE];
    s += slices(1189, 628.7, 45, 27, [[20.99, c[0]], [20.99, c[1]], [20.99, c[2]], [20.99, c[3]], [16.04, c[4]]]);
    s += line('M1171 579h5l2 4M1210 579.5h-5l-2 5M1138 649h6l4-4M1177 678h4v-4M1231 661h-6l-4-3');
    [['133K', 1152.7, 1169, 578], ['(16.03%)', 1139.7, 1169, 587.3], ['174K', 1212.7, 1229.7, 578.7], ['(20.99%)', 1212.7, 1241.7, 588], ['174K', 1119, 1135.7, 648], ['(2...)', 1120, 1135, 657], ['174K', 1157.7, 1174, 677], ['(20.99%)', 1144.7, 1174, 686], ['174K', 1233.7, 1250.3, 661], ['(20.9...)', 1233.7, 1259, 670]]
      .forEach(([t, a, b, y]) => s += span(a, b, y, t, 7.5));
    [['Skirt', 1286.7], ['Stole', 1287.7], ['Trousers', 1302], ['T-shirt', 1294.7], ['Tables', 1293]].forEach(([n, x2], i) => s += dot(1263, 600.7 + i * 14.1, c[i]) + span(1267, x2, 604 + i * 14.1, n, 9.5));
    return s;
  },

  target() {
    let s = span(649.3, 809.3, 740, 'Sum of Target by Month and Category', HEAD);
    s += dot(531.7, 752, BLUE) + span(535.3, 563.3, 755, 'Clothing', 8) + dot(568.7, 752, NAVY) + span(572.7, 608, 755, 'Electronics', 8) + dot(613.3, 752, PALE) + span(616.7, 647.7, 755, 'Furniture', 8);
    const X = i => 561 + i * 32.06, Y = v => 764.3 + (16 - v) * 16.35;
    [16, 14, 12, 10].forEach(v => s += span(531.3, 544, Y(v) + 2.7, v + 'K', 7.5));
    const path = a => 'M' + a.map((v, i) => `${X(i)} ${Y(v)}`).join('L');
    const cl = [16, 16, 16, 12, 12, 12, 14, 14, 14, 16, 16, 16], fu = [11.5, 11.6, 11.8, 10.4, 10.5, 10.6, 10.8, 10.9, 11, 11.1, 11.3, 11.4];
    s += line(path(cl), BLUE, 1.4) + line(path([16, 16, 16, 9, 9, 9, 9, 9, 9, 9, 9, 9]), NAVY, 1.4) + line(path(fu), PALE, 1.3);
    const lab = (i, y3, t) => span(X(i) - (t.length > 4 ? 9.3 : 7.3), X(i) + (t.length > 4 ? 9.3 : 7.3), 715 + y3 / 3, t, 7.5);
    [173, 173, 173, 371, 332, 371, 233, 233, 272, 173, 173, 173].forEach((y, i) => s += lab(i, y, cl[i].toFixed(1) + 'K'));
    [395, 350, 341, 452, 404, 401, 389, 386, 380, 374, 365, 359].forEach((y, i) => s += lab(i, y, fu[i].toFixed(1) + 'K'));
    for (let i = 3; i < 12; i++) s += lab(i, 479, '9.0K');
    MONTHS.forEach((m, i) => s += tilt(X(i) - 1.5, 887, m, 7.7));
    return s;
  },

  map() {
    let s = rect(959, 729, 351, 189, '#fff') + rect(1308, 744, 2, 174, '#c4c4c4') + rect(959, 915, 351, 3, '#c4c4c4') + span(1093, 1180.3, 740, 'Sum of Profit by City', HEAD);
    s += '<svg x="962" y="744" width="346" height="171" viewBox="66 87 1038 513">' + rect(66, 87, 1038, 513, '#abc6f1');
    const land = [
      'M66 87L100 95 112 125 130 142 165 150 200 152 235 160 262 168 275 190 285 195 290 240 305 280 320 305 332 285 338 250 360 228 395 195 420 180 445 175 462 190 475 230 488 262 500 290 515 310 528 345 512 335 495 310 486 280 490 250 515 258 535 285 557 270 558 240 535 210 540 190 570 190 600 175 630 150 650 118 656 87Z',
      'M66 112L85 122 98 150 118 168 130 160 135 172 172 185 160 215 118 240 66 252Z', 'M66 262L125 263 115 295 85 335 66 350Z',
      'M457 310L480 322 535 380 540 405 515 390 480 350Z', 'M535 402L580 406 625 416 600 420 545 411Z', 'M562 345L600 335 620 303 636 315 626 350 610 380 575 375Z',
      'M640 350L645 338 675 336 652 352 668 388 652 372 644 392Z', 'M645 210L662 212 656 240 665 255 648 245Z', 'M668 285L690 282 692 300 675 304Z', 'M645 160l10-10 3 12-8 18z', 'M630 420l25-2 35-3-25 12z',
      'M725 358L755 358 795 368 840 385 858 400 882 428 850 420 828 405 800 420 770 400 765 385 738 375Z', 'M860 385l28-8-3 12-22 6z',
      'M597 520L640 495 690 462 712 445 755 447 768 480 795 492 808 485 815 435 830 470 850 505 880 545 892 575 902 600 612 600Z', 'M70 520L90 480 110 445 118 462 100 520 92 545 74 548Z', 'M338 285l10 8 2 12-10 2z', 'M975 505l22 18-4 4z', 'M1075 485l18-12 4 6-14 12z', 'M735 325l8 8-3 16-6-8z', 'M690 350l22 4-8 6z'
    ];
    s += `<path d="${land.join('')}" fill="#f2f1ed" stroke="#dfe5ea" stroke-width="1.5"/>`;
    s += line('M66 95L95 100M140 90L155 140M170 87L185 150M270 87L250 130 235 160M300 87L310 110 400 140 470 125 465 87M420 145L425 180M460 140L470 180 490 200 520 240M480 180L510 160 540 190M66 225L140 205 165 190M100 245L105 215M66 300L110 270M565 345L600 350 625 320M470 150L490 130 520 140', '#8f8f8f', 2);
    s += line('M712 447V600M782 485V580M782 580H890M803 370V422', '#bbb', 2, 'stroke-dasharray="4 3"');
    [['PAKISTAN', 245, 128, 13], ['OMAN', 172, 191, 13], ['YEMEN', 90, 237, 13], ['MYANMAR', 460, 195, 13], ['THAILAND', 502, 235, 13], ['VIETNAM', 560, 249, 13], ['PHILIPPINES', 658, 263, 13], ['MALAYSIA', 510, 326, 13], ['INDONESIA', 619, 364, 14], ['PAPUA NEW', 826, 396, 12], ['GUINEA', 828, 408, 12], ['AUSTRALIA', 750, 560, 18]].forEach(([n, x, y, z]) => s += txt(x, y, n, z, '#111', 'middle'));
    [['Arabian Sea', 207, 256, 13], ['Bay', 391, 242, 13], ['South', 605, 206, 12], ['China', 605, 218, 12], ['Sea', 607, 231, 12], ['Philippine Sea', 741, 235, 13], ['Celebes', 652, 325, 12], ['Sea', 654, 338, 12], ['Java Sea', 588, 395, 12], ['Banda Sea', 686, 399, 12], ['Coral Sea', 950, 485, 13], ['Indian', 335, 514, 17], ['Ocean', 336, 533, 17]].forEach(([n, x, y, z]) => s += txt(x, y, n, z, '#2f58bd', 'middle', 'style="font-weight:400"'));
    [[171, 89, 129], [300, 97, 117], [180, 143, 102], [288, 147, 72], [357, 157, 103], [465, 132, 95], [267, 182, 60], [358, 195, 95], [237, 225, 104], [354, 235, 99], [264, 273, 122], [831, 533, 102]]
      .forEach(([x, y, w]) => s += rect(x, y, w, 37, '#3c3a38', 'opacity=".55" rx="4"'));
    [[303, 101, 7], [320, 103, 9], [321, 120, 11], [312, 142, 8], [350, 143, 9], [358, 154, 11], [382, 153, 7], [408, 138, 9], [450, 152, 9], [295, 162, 11], [286, 174, 8], [290, 188, 9], [345, 172, 8], [312, 172, 9], [407, 178, 10], [295, 208, 9], [332, 219, 7], [297, 235, 9], [326, 254, 10], [345, 253, 5], [320, 290, 9], [881, 587, 8]].forEach(([x, y, r]) => s += `<circle cx="${x}" cy="${y}" r="${r}" fill="#2b7fd0" opacity=".85" stroke="#1c68b5"/>`);
    [['Chandigarh', 238, 117], ['Allahabad', 358, 126], ['Udaipur', 231, 171], ['Delhi', 324, 174], ['Gangtok', 408, 183], ['Kohima', 512, 162], ['Goa', 297, 208], ['Kolkata', 406, 222], ['Mumbai', 289, 252], ['Chennai', 403, 261], ['Bangalore', 325, 300], ['Kashmir', 882, 560]].forEach(([n, x, y]) => s += txt(x, y, n, 19.5, '#1d1d1d', 'middle'));
    s += rect(72, 573, 6, 6, '#f25022') + rect(79, 573, 6, 6, '#7fba00') + rect(72, 580, 6, 6, '#00a4ef') + rect(79, 580, 6, 6, '#ffb900') + span(89, 156, 584, 'Microsoft Bing', 11, '#667', 'style="font-weight:400"');
    s += span(870, 1030, 588, '© 2025 Microsoft Corporation', 11, '#667') + span(1038, 1070, 588, 'Terms', 11, '#3f67c4') + '</svg>';
    // selection handles
    s += `<g fill="#8f8f8f">` + [[957, 728, 13, 4], [957, 728, 4, 13], [1125, 728, 18, 4], [1299, 728, 13, 4], [1308, 728, 4, 13], [956, 814, 5, 18], [1308, 814, 4, 18], [957, 915, 13, 4], [957, 906, 4, 12], [1125, 915, 18, 4], [1299, 915, 13, 4], [1308, 906, 4, 12]].map(([x, y, w, h]) => `<rect x="${x}" y="${y}" width="${w}" height="${h}"/>`).join('') + '</g>';
    return s;
  }
};

document.querySelectorAll('svg[data-chart]').forEach(el => { el.innerHTML = charts[el.dataset.chart](); });

// KPI cards: box x, width, top, height, value with its extent, caption with its extent
const cards = [
  [516, 81, 292, 75, '63M', 529.5, 584, 'Sum of Salary', 528, 585.7], [595, 97, 292, 75, '432K', 613, 676, 'Sum of Amount', 611.7, 677.3],
  [690, 93, 292, 75, '24K', 714, 761.7, 'Sum of Profit', 709.7, 765], [781, 86, 292, 75, '436K', 794, 856.7, 'Sum of Target', 796, 854.3],
  [868, 89, 292, 75, '5615', 883.3, 942.3, 'Sum of Quantity', 878.3, 947.3], [955, 104, 292, 75, '365', 986, 1030, 'Count of Year', 980, 1036],
  [1057, 82, 292, 75, '1000', 1070.5, 1129, 'Count of Name', 1067, 1130.3], [1139, 96, 322, 66, '307', 1165, 1210.7, 'Count of Order ID', 1150.3, 1224.3]
];
document.querySelector('.cards').innerHTML = cards.map(([x, w, y, h, v, a, b, n, c, d]) => {
  const base = y === 322 ? 360 : 335, cap = y === 322 ? 376 : 350;
  return `<div class="card" style="left:${x - 60}px;top:${y - 255}px;width:${w}px;height:${h}px"><svg viewBox="${x + 2} ${y + 2} ${w - 4} ${h - 4}">${span(a, b, base, v, 26, BLUE)}${span(c, d, cap, n, 9.4, BLUE)}</svg></div>`;
}).join('');
```
